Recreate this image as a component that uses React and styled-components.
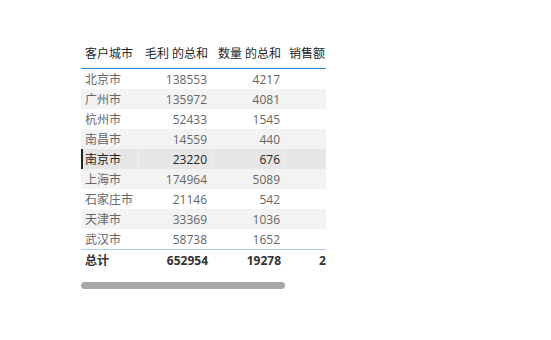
import React from 'react';
import styled, { createGlobalStyle } from 'styled-components';

const GlobalStyle = createGlobalStyle`
    body {
        margin: 0;
        background: #ffffff;
        font-family: "Open Sans", "Noto Sans CJK SC", sans-serif;
    }
`;

const rows = [
    { city: '北京市', profit: 138553, qty: 4217 },
    { city: '广州市', profit: 135972, qty: 4081 },
    { city: '杭州市', profit: 52433, qty: 1545 },
    { city: '南昌市', profit: 14559, qty: 440 },
    { city: '南京市', profit: 23220, qty: 676, selected: true },
    { city: '上海市', profit: 174964, qty: 5089 },
    { city: '石家庄市', profit: 21146, qty: 542 },
    { city: '天津市', profit: 33369, qty: 1036 },
    { city: '武汉市', profit: 58738, qty: 1652 },
];

const columns = '58px 73px 73px 86px';

const App = () => {
    return (<Page>
        <GlobalStyle />
        <Visual>
            <Viewport>
                <HeaderRow>
                    <HeadCell>客户城市</HeadCell>
                    <HeadCell align="right">毛利 的总和</HeadCell>
                    <HeadCell align="right">数量 的总和</HeadCell>
                    <HeadCell>销售额 的总和</HeadCell>
                </HeaderRow>
                {
                    rows.map((row, i) => {
                        return <Row key={row.city} striped={i % 2 === 1} selected={row.selected}>
                            <Cell selected={row.selected}>{row.city}</Cell>
                            <Cell align="right" selected={row.selected}>{row.profit}</Cell>
                            <Cell align="right" selected={row.selected}>{row.qty}</Cell>
                            <Cell selected={row.selected}></Cell>
                        </Row>
                    })
                }
                <TotalRow>
                    <TotalCell>总计</TotalCell>
                    <TotalCell align="right">652954</TotalCell>
                    <TotalCell align="right">19278</TotalCell>
                    <TotalCell align="right">2497548</TotalCell>
                </TotalRow>
            </Viewport>
            <ScrollBar />
        </Visual>
    </Page>);
}

export default App;

const Page = styled.div`
    width: 551px;
    height: 340px;
    padding: 38px 0 0 81px;
    box-sizing: border-box;
`

const Visual = styled.div`
    width: 245px;
    display: flex;
    flex-direction: column;
`

const Viewport = styled.div`
    width: 245px;
    overflow: hidden;
`

const HeaderRow = styled.div`
    display: grid;
    grid-template-columns: ${columns};
    width: max-content;
    border-bottom: 1px solid #2b88d8;
`

const HeadCell = styled.div`
    padding: 8px 4px 6px;
    font-size: 12px;
    line-height: 16px;
    color: #252423;
    white-space: nowrap;
    text-align: ${props => props.align || 'left'};
`

const Row = styled.div`
    display: grid;
    grid-template-columns: ${columns};
    width: max-content;
    height: 20px;
    background: ${props => props.selected ? '#e6e6e6' : props.striped ? '#f3f3f3' : '#ffffff'};
    box-shadow: ${props => props.selected ? 'inset 2px 0 0 #252423' : 'none'};
`

const Cell = styled.div`
    padding: 1px 4px 0;
    font-size: 12px;
    line-height: 19px;
    color: ${props => props.selected ? '#252423' : '#666666'};
    white-space: nowrap;
    text-align: ${props => props.align || 'left'};
    border-right: 1px solid ${props => props.selected ? '#f0f0f0' : 'transparent'};
`

const TotalRow = styled.div`
    display: grid;
    grid-template-columns: ${columns};
    width: max-content;
    height: 21px;
    border-top: 1px solid #a6cdf0;
`

const TotalCell = styled.div`
    padding: 0 4px;
    font-size: 12px;
    line-height: 21px;
    font-weight: bold;
    color: #333333;
    white-space: nowrap;
    text-align: ${props => props.align || 'left'};
`

const ScrollBar = styled.div`
    width: 204px;
    height: 7px;
    margin-top: 11px;
    border-radius: 4px;
    background: #a8a8a8;
`
